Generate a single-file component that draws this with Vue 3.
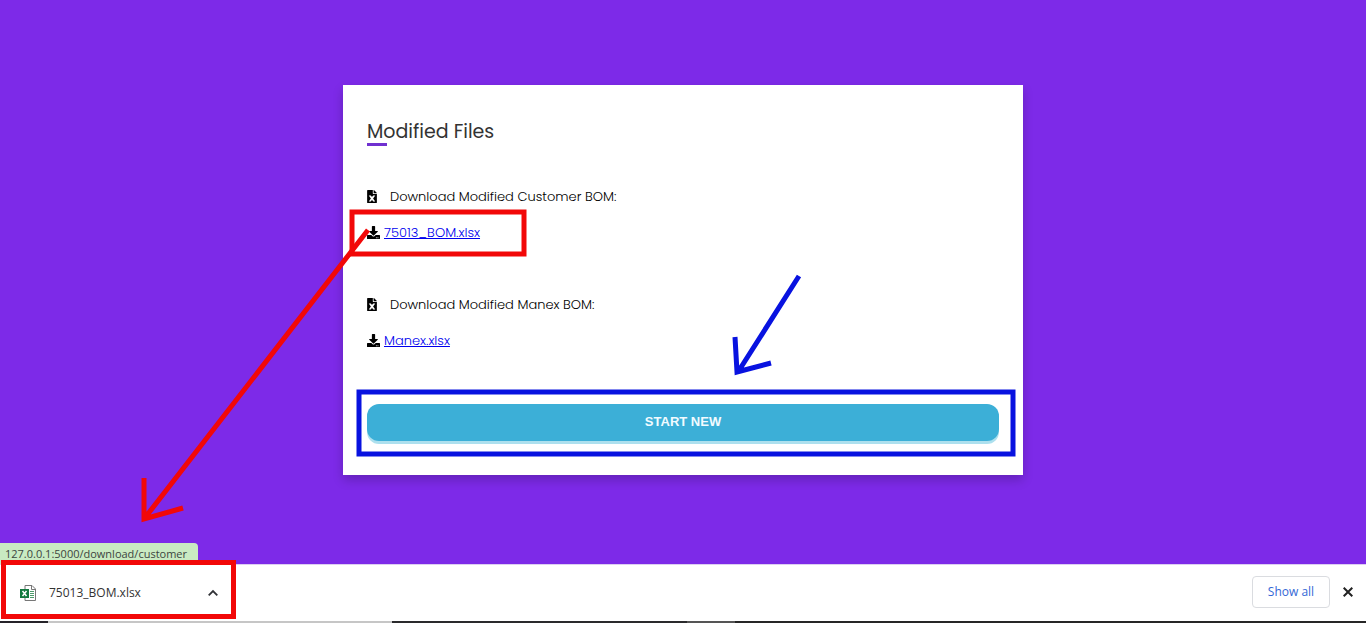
<script setup>
const groups = [
  { label: 'Download Modified Customer BOM:', file: '75013_BOM.xlsx', href: '#customer' },
  { label: 'Download Modified Manex BOM:', file: 'Manex.xlsx', href: '#manex' },
]
</script>

<template>
  <div class="screen">
    <main class="stage">
      <section class="card">
        <h1 class="title">Modified Files</h1>
        <div v-for="g in groups" :key="g.file" class="group">
          <p class="row label">
            <svg class="icon-file" viewBox="0 0 384 512" aria-hidden="true">
              <path fill-rule="evenodd" d="M224 136V0H24C11 0 0 11 0 24v464c0 13 11 24 24 24h336c13 0 24-11 24-24V160H248c-13 0-24-11-24-24zM64 212h84l44 68 44-68h84l-84 120 84 120h-84l-44-68-44 68H64l84-120zM384 122v6H256V0h6c6 0 12 3 17 7l98 98c4 5 7 11 7 17z" />
            </svg>
            <span>{{ g.label }}</span>
          </p>
          <p class="row">
            <svg class="icon-download" viewBox="0 0 512 512" aria-hidden="true">
              <path fill-rule="evenodd" d="M216 0h80c13 0 24 11 24 24v168h88c18 0 27 21 14 34L270 378c-7 7-20 7-27 0L90 226c-12-13-3-34 14-34h88V24c0-13 11-24 24-24zM512 376v112c0 13-11 24-24 24H24c-13 0-24-11-24-24V376c0-13 11-24 24-24h147l49 49c20 20 52 20 72 0l49-49h147c13 0 24 11 24 24zM388 464a20 20 0 1 0-40 0 20 20 0 0 0 40 0zM452 464a20 20 0 1 0-40 0 20 20 0 0 0 40 0z" />
            </svg>
            <a :href="g.href">{{ g.file }}</a>
          </p>
        </div>
        <button class="start" type="button">START NEW</button>

        <svg class="marks" width="680" height="390" viewBox="0 0 680 390" aria-hidden="true">
          <g class="red">
            <rect x="9" y="127" width="172" height="42" />
            <path d="M25 145L-199 434M-199 393V434L-160 423" />
          </g>
          <g class="blue">
            <rect x="16" y="307" width="654" height="62" />
            <path d="M456 191L395 287M392 252L394 287L428 278" />
          </g>
        </svg>
      </section>
      <div class="status">127.0.0.1:5000/download/customer</div>
    </main>

    <footer class="shelf">
      <button class="item" type="button">
        <svg class="icon-excel" viewBox="0 0 16 16" aria-hidden="true">
          <path d="M5 .5h7l3.500 3.500v11.500H5z" fill="#fff" stroke="#777" />
          <path d="M11.500.5v4h4" fill="none" stroke="#777" />
          <path d="M10 6.500h4M10 8.500h4M10 10.500h4M10 12.500h4" stroke="#4c9b6b" />
          <path d="M0 4h9v9H0z" fill="#13793f" />
          <path d="M2.500 6l4 5M6.500 6l-4 5" stroke="#fff" stroke-width="1.500" />
        </svg>
        <span class="name">75013_BOM.xlsx</span>
        <svg class="icon-caret" viewBox="0 0 10 10" aria-hidden="true">
          <path d="M.7 7.300L5 3l4.300 4.300" fill="none" stroke="#303236" stroke-width="1.800" />
        </svg>
      </button>
      <button class="all" type="button">Show all</button>
      <button class="close" type="button" aria-label="Close">
        <svg viewBox="0 0 10 10" aria-hidden="true">
          <path d="M.7.700l8.600 8.600M9.300.700L.700 9.300" stroke="#222" stroke-width="2" />
        </svg>
      </button>
    </footer>
    <div class="edge"></div>
  </div>
</template>

<style>
body {
  margin: 0;
}
</style>

<style scoped>
.screen {
  min-height: 100vh;
  display: flex;
  flex-direction: column;
  overflow: hidden;
  background: #7d2ae8;
  font-family: Poppins, Inter, "Open Sans", sans-serif;
}
.stage {
  position: relative;
  flex: 1;
  display: flex;
  align-items: center;
  justify-content: center;
  padding: 0 24px 4px;
}
.card {
  position: relative;
  box-sizing: border-box;
  width: 100%;
  max-width: 680px;
  padding: 29px 24px 34px;
  background: #fff;
  box-shadow: 0 5px 10px rgba(0, 0, 0, 0.2);
}
.title {
  position: relative;
  margin: 0 0 29px;
  font-size: 19px;
  line-height: 36px;
  font-weight: 400;
  color: #333;
}
.title::after {
  content: "";
  position: absolute;
  left: 0;
  bottom: 4px;
  width: 20px;
  height: 3px;
  background: #7030d0;
}
.group {
  margin-bottom: 36px;
}
.row {
  display: flex;
  align-items: center;
  gap: 4px;
  margin: 0;
  height: 36px;
  font-size: 13px;
  line-height: 36px;
  font-weight: 300;
  color: #000;
}
.label {
  gap: 13px;
}
.row svg {
  margin-bottom: 2px;
}
.row a {
  color: #0000ee;
}
.icon-file {
  width: 10px;
  height: 13px;
}
.icon-download {
  width: 13px;
  height: 13px;
}
.start {
  display: block;
  width: 100%;
  height: 37px;
  margin-top: 45px;
  padding: 0 0 2px;
  border: 0;
  border-radius: 12px;
  background: #3cafd7;
  box-shadow: 0 3px 0 #ade0ee;
  color: #f2fbff;
  font: bold 13px "Liberation Sans", Arial, sans-serif;
}
.marks {
  position: absolute;
  top: 0;
  left: 0;
  overflow: visible;
  pointer-events: none;
}
.marks g {
  fill: none;
  stroke-width: 5;
}
.red {
  stroke: #f20808;
}
.blue {
  stroke: #0812e0;
}
.status {
  position: absolute;
  left: 0;
  bottom: 0;
  height: 21px;
  box-sizing: border-box;
  padding: 0 11px 0 5px;
  border-radius: 0 4px 0 0;
  background: #c9eac2;
  color: #3c4440;
  font: 11px/21px "Open Sans", "Noto Sans", sans-serif;
}
.shelf {
  position: relative;
  display: flex;
  align-items: center;
  box-sizing: border-box;
  height: 57px;
  padding: 0 12px 2px 0;
  background: #fff;
  box-shadow: inset 0 1px 0 #dccdf2;
  font-family: "Open Sans", "Noto Sans", sans-serif;
}
.shelf button {
  border: 0;
  background: none;
  font-family: inherit;
}
.shelf .item {
  position: relative;
  display: flex;
  align-items: center;
  box-sizing: border-box;
  width: 236px;
  height: 55px;
  padding: 2px 18px 0 20px;
  font-size: 12px;
  color: #333;
}
.item::after {
  content: "";
  position: absolute;
  inset: -4px 0 0 1px;
  border: 5px solid #f20808;
}
.name {
  margin-left: 13px;
}
.icon-excel {
  width: 16px;
  height: 16px;
}
.icon-caret {
  width: 10px;
  height: 10px;
  margin-left: auto;
}
.shelf .all {
  box-sizing: border-box;
  width: 78px;
  height: 32px;
  margin-left: auto;
  padding: 0;
  border: 1px solid #dadce0;
  border-radius: 4px;
  color: #3367d6;
  font-size: 12px;
  font-weight: 500;
}
.shelf .close {
  display: flex;
  margin-left: 12px;
  padding: 1px;
}
.close svg {
  width: 10px;
  height: 10px;
}
.edge {
  height: 2px;
  background: linear-gradient(90deg, #252329 48px, #c6c6c6 48px 392px, #2a2a2c 392px 687px, #555 687px 735px, #262626 735px);
}
</style>
